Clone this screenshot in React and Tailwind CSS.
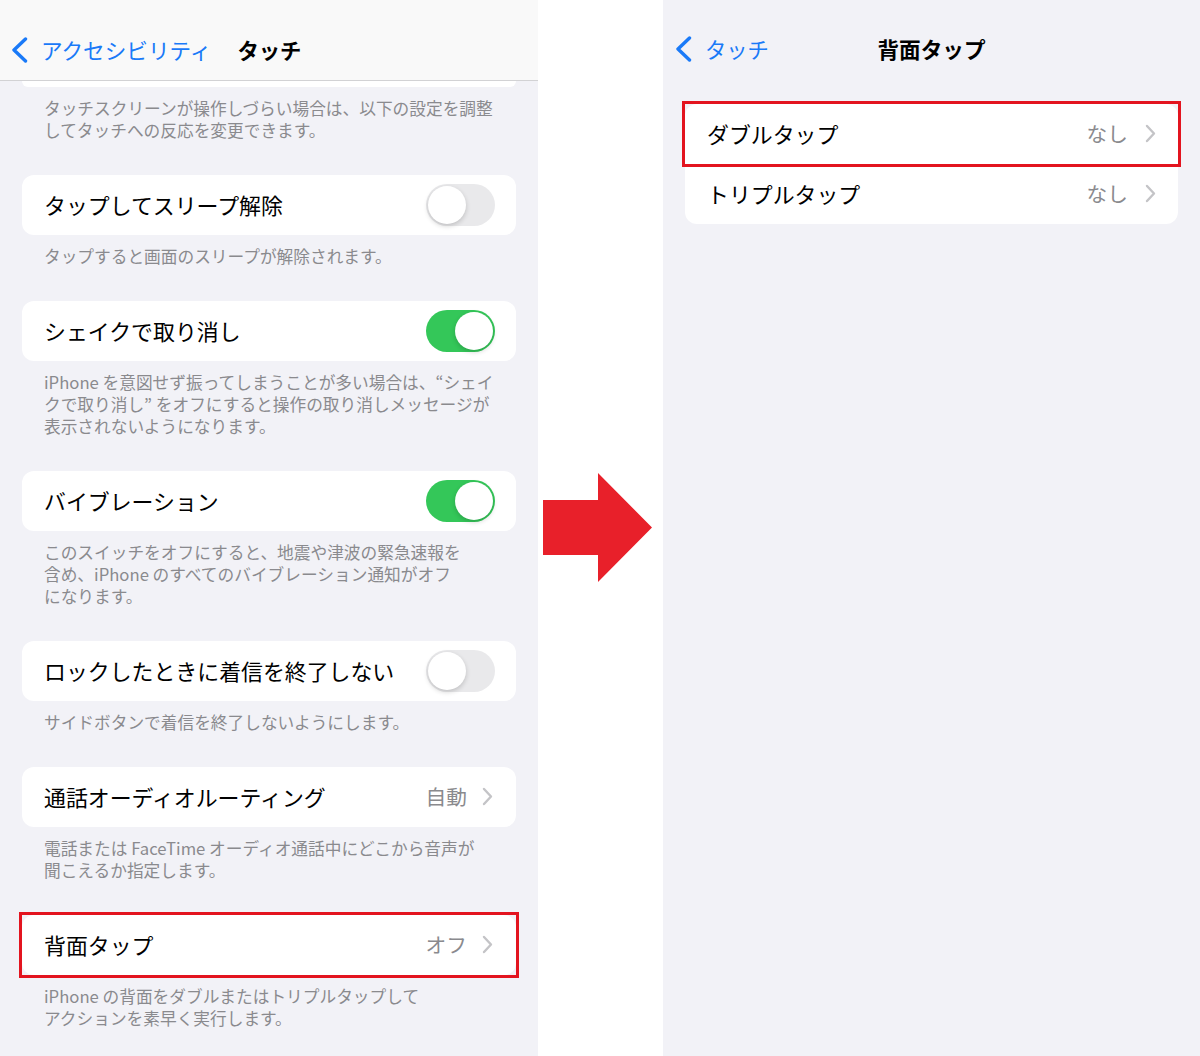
import { useState } from "react";

const FONT = { fontFamily: '"Noto Sans CJK JP", "Noto Sans", sans-serif' };

function BackChevron() {
  return (
    <svg width="17" height="26" viewBox="0 0 17 26" className="shrink-0">
      <path d="M14.5 2 L3 13 L14.5 24" fill="none" stroke="#1a7af8" strokeWidth="3.4" strokeLinecap="round" strokeLinejoin="round" />
    </svg>
  );
}

function Chevron() {
  return (
    <svg width="11" height="19" viewBox="0 0 11 19" className="shrink-0">
      <path d="M2 2 L9 9.5 L2 17" fill="none" stroke="#c4c4c7" strokeWidth="2.4" strokeLinecap="round" strokeLinejoin="round" />
    </svg>
  );
}

function Toggle({ on }) {
  return (
    <div
      className={
        "w-[69px] h-[42px] rounded-full p-[2px] flex items-center " +
        (on ? "bg-[#34c759] justify-end" : "bg-[#e9e9eb] justify-start")
      }
    >
      <div className="w-[38px] h-[38px] rounded-full bg-white shadow-[0_2px_5px_rgba(0,0,0,0.18)]" />
    </div>
  );
}

function Row({ label, value, toggle, highlight }) {
  return (
    <div className="relative mx-[22px] h-[60px] bg-white rounded-[12px] flex items-center pl-[22px] pr-[21px]">
      <span className="flex-1 text-[21.9px] leading-[30px] text-black whitespace-nowrap">{label}</span>
      {toggle !== undefined ? (
        <Toggle on={toggle} />
      ) : (
        <div className="flex items-center gap-[15px] pr-[2px]">
          <span className="text-[20.7px] text-[#8a8a8e]">{value}</span>
          <Chevron />
        </div>
      )}
      {highlight && <div className="absolute -inset-[3px] border-[3.5px] border-[#e3141f]" />}
    </div>
  );
}

function Footer({ lines }) {
  return (
    <div className="px-[44px] pt-[10px] pb-[34px] text-[16.7px] leading-[22px] text-[#8a8a8e]">
      {lines.map((l, i) => (
        <div key={i} className="whitespace-nowrap">{l}</div>
      ))}
    </div>
  );
}

export default function App() {
  const [items] = useState([
    { label: "タップしてスリープ解除", toggle: false, foot: ["タップすると画面のスリープが解除されます。"] },
    {
      label: "シェイクで取り消し",
      toggle: true,
      foot: [
        "iPhone を意図せず振ってしまうことが多い場合は、“シェイ",
        "クで取り消し” をオフにすると操作の取り消しメッセージが",
        "表示されないようになります。",
      ],
    },
    {
      label: "バイブレーション",
      toggle: true,
      foot: [
        "このスイッチをオフにすると、地震や津波の緊急速報を",
        "含め、iPhone のすべてのバイブレーション通知がオフ",
        "になります。",
      ],
    },
    { label: "ロックしたときに着信を終了しない", toggle: false, foot: ["サイドボタンで着信を終了しないようにします。"] },
    {
      label: "通話オーディオルーティング",
      value: "自動",
      foot: ["電話または FaceTime オーディオ通話中にどこから音声が", "聞こえるか指定します。"],
    },
    {
      label: "背面タップ",
      value: "オフ",
      highlight: true,
      foot: ["iPhone の背面をダブルまたはトリプルタップして", "アクションを素早く実行します。"],
    },
  ]);

  return (
    <div className="flex w-[1200px] h-[1056px] bg-white overflow-hidden" style={FONT}>
      {/* left: touch settings */}
      <div className="w-[538px] h-full bg-[#f2f2f7] flex flex-col overflow-hidden">
        <div className="h-[81px] shrink-0 bg-[#f9f9f9] border-b border-[#d2d2d4] flex items-center pt-[20px] pl-[11px]">
          <BackChevron />
          <span className="ml-[13px] text-[21.6px] leading-[30px] text-[#1a7af8]">アクセシビリティ</span>
          <span className="ml-[26px] text-[21.3px] leading-[30px] font-bold text-black">タッチ</span>
        </div>
        <div className="mx-[22px] h-[6px] shrink-0 bg-white rounded-b-[12px]" />
        <Footer lines={["タッチスクリーンが操作しづらい場合は、以下の設定を調整", "してタッチへの反応を変更できます。"]} />
        {items.map((it) => (
          <div key={it.label}>
            <Row label={it.label} value={it.value} toggle={it.toggle} highlight={it.highlight} />
            <Footer lines={it.foot} />
          </div>
        ))}
      </div>

      {/* middle arrow */}
      <div className="w-[125px] h-full bg-white flex items-center pl-[5px]">
        <svg width="110" height="110" viewBox="0 0 110 110">
          <polygon points="0,27 55,27 55,0 109,54.5 55,109 55,82 0,82" fill="#e8202a" />
        </svg>
      </div>

      {/* right: back tap */}
      <div className="flex-1 h-full bg-[#f2f2f7] flex flex-col">
        <div className="h-[104px] shrink-0 grid grid-cols-[1fr_auto_1fr] items-start pt-[34px]">
          <div className="flex items-center pl-[12px]">
            <BackChevron />
            <span className="ml-[13px] text-[21.3px] leading-[30px] text-[#1a7af8]">タッチ</span>
          </div>
          <span className="text-[21.6px] leading-[30px] font-bold text-black">背面タップ</span>
          <div />
        </div>
        <div className="mx-[22px] bg-white rounded-[12px]">
          <div className="relative h-[60px] flex items-center pl-[22px] pr-[22px]">
            <span className="flex-1 text-[21.9px] leading-[30px] text-black">ダブルタップ</span>
            <div className="flex items-center gap-[17px]">
              <span className="text-[20.7px] text-[#8a8a8e]">なし</span>
              <Chevron />
            </div>
            <div className="absolute -inset-[3px] border-[3.5px] border-[#e3141f]" />
          </div>
          <div className="h-[60px] flex items-center pl-[22px] pr-[22px]">
            <span className="flex-1 text-[21.9px] leading-[30px] text-black">トリプルタップ</span>
            <div className="flex items-center gap-[17px]">
              <span className="text-[20.7px] text-[#8a8a8e]">なし</span>
              <Chevron />
            </div>
          </div>
        </div>
      </div>
    </div>
  );
}
